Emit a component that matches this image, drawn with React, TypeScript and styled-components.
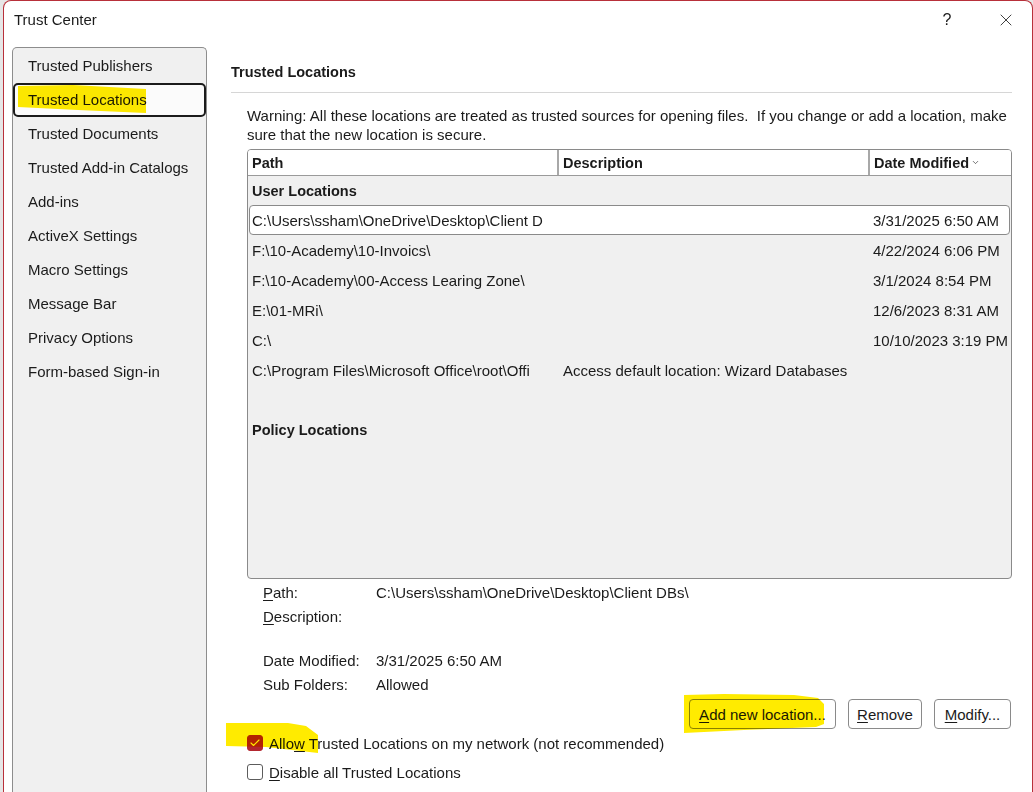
import styled, { createGlobalStyle } from 'styled-components';
import { X, ChevronDown, Check } from 'lucide-react';

const GlobalStyle = createGlobalStyle`
  html, body {
    margin: 0;
    padding: 0;
    overflow: hidden;
    background: #e6e6e6;
  }
  body {
    font-family: 'Liberation Sans', Arial, sans-serif;
    font-size: 15px;
    color: #1b1b1b;
  }
`;

const navItems = [
  'Trusted Publishers',
  'Trusted Locations',
  'Trusted Documents',
  'Trusted Add-in Catalogs',
  'Add-ins',
  'ActiveX Settings',
  'Macro Settings',
  'Message Bar',
  'Privacy Options',
  'Form-based Sign-in',
];

const userLocations = [
  { path: 'C:\\Users\\ssham\\OneDrive\\Desktop\\Client D', desc: '', date: '3/31/2025 6:50 AM' },
  { path: 'F:\\10-Academy\\10-Invoics\\', desc: '', date: '4/22/2024 6:06 PM' },
  { path: 'F:\\10-Academy\\00-Access Learing Zone\\', desc: '', date: '3/1/2024 8:54 PM' },
  { path: 'E:\\01-MRi\\', desc: '', date: '12/6/2023 8:31 AM' },
  { path: 'C:\\', desc: '', date: '10/10/2023 3:19 PM' },
  {
    path: 'C:\\Program Files\\Microsoft Office\\root\\Offi',
    desc: 'Access default location: Wizard Databases',
    date: '',
  },
];

export default function App() {
  return (
    <Backdrop>
      <GlobalStyle />
      <Dialog>
        <TitleBar>
          <Title>Trust Center</Title>
          <TitleButton $w={72}>?</TitleButton>
          <TitleButton $w={46}>
            <X size={20} strokeWidth={1} />
          </TitleButton>
        </TitleBar>
        <Body>
          <Sidebar>
            {navItems.map((item) => (
              <NavItem key={item} $active={item === 'Trusted Locations'}>
                {item}
                {item === 'Trusted Locations' && <NavMark />}
              </NavItem>
            ))}
          </Sidebar>
          <Content>
            <SectionTitle>Trusted Locations</SectionTitle>
            <Inner>
              <Warning>
                Warning: All these locations are treated as trusted sources for opening files.&nbsp; If you
                change or add a location, make sure that the new location is secure.
              </Warning>
              <Table>
                <HeadRow>
                  <HeadCell $sep>Path</HeadCell>
                  <HeadCell $sep>Description</HeadCell>
                  <HeadCell>
                    Date Modified
                    <ChevronDown size={9} strokeWidth={1.6} style={{ marginLeft: 2 }} />
                  </HeadCell>
                </HeadRow>
                <TableBody>
                  <GroupRow>User Locations</GroupRow>
                  {userLocations.map((loc, i) => (
                    <Row key={loc.path} $selected={i === 0}>
                      <Cell>{loc.path}</Cell>
                      <Cell $pad={4}>{loc.desc}</Cell>
                      <Cell $pad={3}>{loc.date}</Cell>
                    </Row>
                  ))}
                  <Row />
                  <GroupRow $tall>Policy Locations</GroupRow>
                </TableBody>
              </Table>
              <Details>
                <DetailLabel>
                  <Key>P</Key>ath:
                </DetailLabel>
                <DetailValue>C:\Users\ssham\OneDrive\Desktop\Client DBs\</DetailValue>
                <DetailLabel $tall>
                  <Key>D</Key>escription:
                </DetailLabel>
                <DetailValue $tall />
                <DetailLabel>Date Modified:</DetailLabel>
                <DetailValue>3/31/2025 6:50 AM</DetailValue>
                <DetailLabel>Sub Folders:</DetailLabel>
                <DetailValue>Allowed</DetailValue>
              </Details>
              <ButtonRow>
                <Button $w={147}>
                  <Key>A</Key>dd new location...
                  <ButtonMark />
                </Button>
                <Button $w={74}>
                  <Key>R</Key>emove
                </Button>
                <Button $w={77}>
                  <Key>M</Key>odify...
                </Button>
              </ButtonRow>
              <CheckRow>
                <CheckBox $checked>
                  <Check size={12} strokeWidth={2.2} color="#fff" />
                </CheckBox>
                <span>
                  Allo<Key>w</Key> Trusted Locations on my network (not recommended)
                </span>
                <CheckMark />
              </CheckRow>
              <CheckRow>
                <CheckBox />
                <span>
                  <Key>D</Key>isable all Trusted Locations
                </span>
              </CheckRow>
            </Inner>
          </Content>
        </Body>
      </Dialog>
    </Backdrop>
  );
}

const Backdrop = styled.div`
  width: 1033px;
  height: 792px;
  padding-left: 3px;
  box-sizing: border-box;
  background: #e6e6e6;
  overflow: hidden;
`;

const Dialog = styled.div`
  height: 100%;
  display: flex;
  flex-direction: column;
  box-sizing: border-box;
  background: #ffffff;
  border: 1px solid #b8303a;
  border-bottom: none;
  border-radius: 8px 8px 0 0;
`;

const TitleBar = styled.div`
  height: 46px;
  flex-shrink: 0;
  display: flex;
  align-items: flex-start;
  padding: 0 3px 0 10px;
  box-sizing: border-box;
`;

const Title = styled.div`
  flex: 1;
  padding-top: 9px;
  line-height: 19px;
`;

const TitleButton = styled.div<{ $w: number }>`
  width: ${(p) => p.$w}px;
  height: 38px;
  display: flex;
  align-items: center;
  justify-content: center;
  font-size: 16px;
  color: #1b1b1b;
`;

const Body = styled.div`
  flex: 1;
  min-height: 0;
  display: flex;
  gap: 24px;
  padding-left: 8px;
`;

const Sidebar = styled.nav`
  width: 195px;
  flex-shrink: 0;
  box-sizing: border-box;
  padding-top: 1px;
  background: #f0f0f0;
  border: 1px solid #8d8d8d;
  border-bottom: none;
  border-radius: 5px 5px 0 0;
`;

const NavItem = styled.div<{ $active?: boolean }>`
  position: relative;
  height: 34px;
  box-sizing: border-box;
  display: flex;
  align-items: center;
  padding: 0 0 2px 13px;
  border: 2px solid ${(p) => (p.$active ? '#1b1b1b' : 'transparent')};
  border-radius: 5px;
  background: ${(p) => (p.$active ? '#fbfbfb' : 'transparent')};
`;

const Marker = styled.span`
  position: absolute;
  background: #ffeb00;
  mix-blend-mode: multiply;
  pointer-events: none;
`;

const NavMark = styled(Marker)`
  left: 3px;
  top: 0px;
  width: 128px;
  height: 28px;
  clip-path: polygon(0 1px, 55px 0, 128px 4px, 128px 28px, 60px 25px, 0 22px);
`;

const Content = styled.main`
  flex: 1;
  min-width: 0;
  padding: 16px 20px 0 0;
`;

const SectionTitle = styled.h2`
  margin: 0;
  font-size: 14.5px;
  font-weight: bold;
  line-height: 19px;
  padding-bottom: 10px;
  border-bottom: 1px solid #d6d6d6;
`;

const Inner = styled.div`
  padding-left: 16px;
`;

const Warning = styled.p`
  margin: 13px 0 0;
  line-height: 19px;
`;

const Table = styled.div`
  margin-top: 5px;
  height: 430px;
  box-sizing: border-box;
  display: flex;
  flex-direction: column;
  border: 1px solid #8a8a8a;
  border-radius: 4px;
  overflow: hidden;
  background: #f0f0f0;
`;

const HeadRow = styled.div`
  height: 26px;
  flex-shrink: 0;
  box-sizing: border-box;
  display: grid;
  grid-template-columns: 311px 311px 1fr;
  background: #ffffff;
  border-bottom: 1px solid #9a9a9a;
`;

const HeadCell = styled.div<{ $sep?: boolean }>`
  display: flex;
  align-items: center;
  padding-left: 4px;
  font-size: 14.5px;
  font-weight: bold;
  border-right: ${(p) => (p.$sep ? '2px solid #a8a8a8' : 'none')};
`;

const TableBody = styled.div`
  flex: 1;
  display: flex;
  flex-direction: column;
`;

const GroupRow = styled.div<{ $tall?: boolean }>`
  height: ${(p) => (p.$tall ? 30 : 29)}px;
  display: flex;
  align-items: center;
  padding-left: 4px;
  font-size: 14.5px;
  font-weight: bold;
`;

const Row = styled.div<{ $selected?: boolean }>`
  height: 30px;
  box-sizing: border-box;
  margin: 0 1px;
  padding-left: 2px;
  display: grid;
  grid-template-columns: 307px 311px 1fr;
  align-items: center;
  border: 1px solid ${(p) => (p.$selected ? '#8a8a8a' : 'transparent')};
  border-radius: 4px;
  background: ${(p) => (p.$selected ? '#ffffff' : 'transparent')};
`;

const Cell = styled.div<{ $pad?: number }>`
  padding-left: ${(p) => p.$pad ?? 0}px;
  white-space: nowrap;
  overflow: hidden;
`;

const Details = styled.div`
  margin-top: 2px;
  padding-left: 16px;
  display: grid;
  grid-template-columns: 113px 1fr;
`;

const DetailLabel = styled.div<{ $tall?: boolean }>`
  height: ${(p) => (p.$tall ? 44 : 24)}px;
  line-height: 24px;
`;

const DetailValue = styled(DetailLabel)``;

const Key = styled.u`
  text-decoration-thickness: 1px;
  text-underline-offset: 2px;
`;

const ButtonRow = styled.div`
  margin-top: 2px;
  display: flex;
  justify-content: flex-end;
  gap: 12px;
  padding-right: 1px;
`;

const Button = styled.div<{ $w: number }>`
  position: relative;
  width: ${(p) => p.$w}px;
  height: 30px;
  box-sizing: border-box;
  display: flex;
  align-items: center;
  justify-content: center;
  border: 1px solid #8a8a8a;
  border-radius: 4px;
  background: #ffffff;
`;

const ButtonMark = styled(Marker)`
  left: -6px;
  top: -6px;
  width: 140px;
  height: 39px;
  clip-path: polygon(0 1px, 40px 0, 110px 1px, 134px 4px, 140px 10px, 140px 30px, 132px 33px, 60px 36px, 0 39px);
`;

const CheckRow = styled.div`
  position: relative;
  height: 20px;
  margin-top: 4px;
  display: flex;
  align-items: center;
  gap: 6px;
  & + & {
    margin-top: 9px;
  }
`;

const CheckBox = styled.span<{ $checked?: boolean }>`
  width: 16px;
  height: 16px;
  box-sizing: border-box;
  display: flex;
  align-items: center;
  justify-content: center;
  border-radius: 3px;
  border: 1px solid ${(p) => (p.$checked ? '#b3262f' : '#5c5c5c')};
  background: ${(p) => (p.$checked ? '#b3262f' : '#ffffff')};
`;

const CheckMark = styled(Marker)`
  left: -21px;
  top: -10px;
  width: 92px;
  height: 30px;
  clip-path: polygon(0 0, 62px 0, 80px 3px, 92px 12px, 92px 30px, 40px 24px, 0 23px);
`;
